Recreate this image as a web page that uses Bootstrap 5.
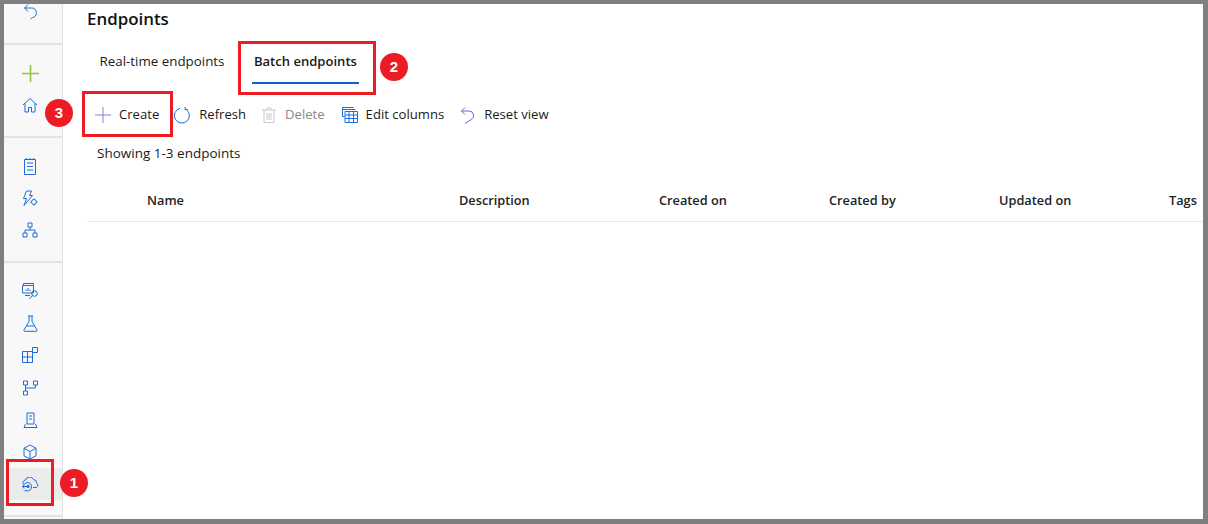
<!DOCTYPE html>
<html lang="en">

<head>
	<meta charset="UTF-8">
	<title>Endpoints</title>
	<link href="https://cdn.jsdelivr.net/npm/bootstrap@5.3.0/dist/css/bootstrap.min.css" rel="stylesheet">
	<style>
		html, body { height: 524px; overflow: hidden; }
		body {
			background: #7f7f7f;
			padding: 4px 5px 5px 4px;
			font-family: "Open Sans", "Noto Sans", sans-serif;
			font-size: 13px;
			color: #1b1a19;
		}
		svg { display: block; fill: none; stroke: currentColor; stroke-width: 1; }
		.app-frame { height: 515px; background: #fff; overflow: hidden; }
		.side-rail { width: 59px; flex: none; background: #f8f8f8; border-right: 1px solid #e1e1e1; color: #1a6ddb; }
		.rail-group { border-bottom: 2px solid #e3e3e3; padding-left: 5px; }
		.rail-group-undo { height: 41px; }
		.rail-group-add { height: 93px; padding-top: 12px; }
		.rail-group-tasks { height: 125px; padding-top: 12px; }
		.rail-group-assets { height: 254px; padding-top: 12px; }
		.rail-item { height: 32.2px; width: 53px; padding-right: 11px; }
		.rail-item.is-active { background: #ebebeb; }
		.main-pane { padding-left: 24px; min-width: 0; }
		.page-title { font-size: 16.9px; font-weight: 600; line-height: 22px; padding-top: 4px; margin: 0; color: #111; }
		.tab-row { padding-top: 16px; height: 56px; }
		.tab-link { height: 38px; line-height: 30px; padding: 0 12.5px; font-size: 13.35px; color: #1b1a19; text-decoration: none; border-bottom: 2px solid transparent; }
		.tab-link.is-current { font-size: 13.05px; font-weight: 600; border-bottom-color: #0f5fc9; padding: 0 2px; margin-left: 15px; }
		.tool-row { height: 40px; margin-top: 9px; }
		.tool-btn { border: 0; background: none; padding: 0; height: 32px; color: #1b1a19; font-size: 13.1px; margin-right: 16px; }
		.tool-btn svg { color: #1a6ddb; }
		.tool-btn.is-first { margin-left: 8px; margin-right: 15px; }
		.tool-btn.is-disabled { color: #8a8886; margin-right: 17px; }
		.tool-btn.is-disabled svg { color: #c8c8c8; }
		.count-line { padding: 8px 0 0 10px; line-height: 20px; font-size: 13.5px; height: 39px; }
		.head-row { height: 35px; margin-top: 13px; padding-top: 5px; font-size: 12.75px; font-weight: 600; border-bottom: 1px solid #e8e8e8; padding-left: 60px; line-height: 16px; white-space: nowrap; color: #222; }
		.head-cell { width: 170px; flex: none; }
		.head-cell-name { width: 312px; }
		.head-cell-desc { width: 200px; }
		.note-box { position: absolute; border: 3px solid #ed1c24; pointer-events: none; }
		.note-dot { position: absolute; width: 28px; height: 28px; border-radius: 50%; background: #ed1c24; color: #fff; font: 700 15px/28px "Liberation Sans", sans-serif; text-align: center; }
	</style>
</head>

<body>
	<div class="app-frame d-flex position-relative">
		<nav class="side-rail d-flex flex-column">
			<div class="rail-group rail-group-undo">
				<div class="rail-item d-flex justify-content-center align-items-center" style="height: 17px">
					<svg width="14" height="17" viewBox="0 0 14 17"><path d="M5 .5 1.500 4 5 7.500M1.500 4H8.500a4.800 4.800 0 0 1 1 9.500L7.500 15"/></svg>
				</div>
			</div>
			<div class="rail-group rail-group-add">
				<div class="rail-item d-flex justify-content-center align-items-center">
					<svg width="17" height="17" viewBox="0 0 17 17" style="color:#8cc63f;stroke-width:1.6"><path d="M8.500 0v17M0 8.500h17"/></svg>
				</div>
				<div class="rail-item d-flex justify-content-center align-items-center">
					<svg width="16" height="16" viewBox="0 0 16 16"><path d="M1 8 8 1.500 15 8M3 6.500V15h3.500v-4.500h3V15H13V6.500"/></svg>
				</div>
			</div>
			<div class="rail-group rail-group-tasks">
				<div class="rail-item d-flex justify-content-center align-items-center">
					<svg width="14" height="17" viewBox="0 0 14 17"><path d="M1.500 1.500h11v15h-11zM4 5h6M4 8.500h6M4 12h6M3.500 0v2M7 0v2M10.500 0v2"/></svg>
				</div>
				<div class="rail-item d-flex justify-content-center align-items-center">
					<svg width="16" height="17" viewBox="0 0 16 17"><path d="M4.500 1h5L7.500 5.500h3L2 15.500l2.500-7H1.500z"/><circle cx="12" cy="12" r="2.500"/><path d="M12 8.500v1M12 14.500v1M8.500 12h1M14.500 12h1"/></svg>
				</div>
				<div class="rail-item d-flex justify-content-center align-items-center">
					<svg width="16" height="16" viewBox="0 0 16 16"><path d="M6 1h4v4H6zM1 11h4v4H1zM11 11h4v4h-4zM8 5v3M3 11V8h10v3"/></svg>
				</div>
			</div>
			<div class="rail-group rail-group-assets">
				<div class="rail-item d-flex justify-content-center align-items-center">
					<svg width="17" height="17" viewBox="0 0 17 17"><path d="M1.500 2V.5h10V2M.5 2.500h11V10H.5zM3 12.500h5M4 8V6.500M6 8V5M8 8V6.500"/><circle cx="12.500" cy="10.500" r="2.800"/><path d="M10.500 12.500 7.500 16"/></svg>
				</div>
				<div class="rail-item d-flex justify-content-center align-items-center">
					<svg width="15" height="17" viewBox="0 0 15 17"><path d="M5 1h5M6 1v5.500L1 15a.8.8 0 0 0 .7 1.300h11.600A.8.8 0 0 0 14 15L9 6.500V1M3.500 11h8"/></svg>
				</div>
				<div class="rail-item d-flex justify-content-center align-items-center">
					<svg width="16" height="16" viewBox="0 0 16 16"><path d="M.5 4.500h10v11H.5zM.5 10h10M5.500 4.500v11M10.500 .5h5v5h-5z"/></svg>
				</div>
				<div class="rail-item d-flex justify-content-center align-items-center">
					<svg width="15" height="16" viewBox="0 0 15 16"><path d="M.5 1h4v4h-4zM10.500 1h4v4h-4zM.5 11h4v4h-4zM2.500 5v6M2.500 8h10V5"/></svg>
				</div>
				<div class="rail-item d-flex justify-content-center align-items-center">
					<svg width="15" height="16" viewBox="0 0 15 16"><path d="M4 1h7v11H4zM6 4h3M6 7h3M2.500 12 1 15.500h13L12.500 12"/></svg>
				</div>
				<div class="rail-item d-flex justify-content-center align-items-center">
					<svg width="14" height="16" viewBox="0 0 14 16"><path d="M7 1 13 4.200v7.600L7 15 1 11.800V4.200zM1 4.200 7 7.500l6-3.300M7 7.500V15"/></svg>
				</div>
				<div class="rail-item is-active d-flex justify-content-center align-items-center">
					<svg width="18" height="15" viewBox="0 0 18 15"><path d="M2.500 7.500A2.800 2.800 0 0 1 4.500 3a4.300 4.300 0 0 1 8-.5A3.300 3.300 0 0 1 15.500 6a2.500 2.500 0 0 1 0 4.500H12"/><path d="M3 11.500A4 4 0 1 1 10.500 10a3.800 3.800 0 0 1-4.500 3.800H3.500"/><circle cx="7" cy="9.500" r="1.200" fill="currentColor"/><path d="M1 9.500h5"/></svg>
				</div>
			</div>
		</nav>

		<main class="main-pane flex-grow-1">
			<h1 class="page-title">Endpoints</h1>
			<div class="tab-row d-flex">
				<a class="tab-link" href="#">Real-time endpoints</a>
				<a class="tab-link is-current" href="#">Batch endpoints</a>
			</div>
			<div class="tool-row d-flex align-items-center">
				<button class="tool-btn is-first d-flex align-items-center gap-2" type="button">
					<svg width="16" height="16" viewBox="0 0 16 16" style="color:#8a80d8"><path d="M8 0v16M0 8h16"/></svg>Create
				</button>
				<button class="tool-btn d-flex align-items-center gap-2" type="button">
					<svg width="17" height="17" viewBox="0 0 17 17"><path d="M6 1.300A7.500 7.500 0 1 0 11.500 2M11 0v2.500h2.800"/></svg>Refresh
				</button>
				<button class="tool-btn is-disabled d-flex align-items-center gap-2" type="button" disabled>
					<svg width="15" height="16" viewBox="0 0 15 16"><path d="M0 3h14M5 3V1h4v2M2 3v12.500h10V3M5 6v7M7 6v7M9 6v7"/></svg>Delete
				</button>
				<button class="tool-btn d-flex align-items-center gap-2" type="button">
					<svg width="16" height="16" viewBox="0 0 16 16"><path d="M.5 .5h11M.5 2.500h13M.5 .5v9h2M3 4.500h12.500v11H3zM3 8h12.500M3 11.500h12.500M7 4.500v11M11.500 4.500v11"/></svg>Edit columns
				</button>
				<button class="tool-btn d-flex align-items-center gap-2" type="button">
					<svg width="16" height="17" viewBox="0 0 16 17" style="color:#5a6ae0"><path d="M5 .5 1.500 4 5 7.500M1.500 4H9a4.500 4.500 0 0 1 2.500 8.300L5 16.500"/></svg>Reset view
				</button>
			</div>
			<div class="count-line">Showing 1-3 endpoints</div>
			<div class="head-row d-flex align-items-start">
				<div class="head-cell head-cell-name">Name</div>
				<div class="head-cell head-cell-desc">Description</div>
				<div class="head-cell">Created on</div>
				<div class="head-cell">Created by</div>
				<div class="head-cell">Updated on</div>
				<div class="head-cell">Tags</div>
			</div>
		</main>

		<!-- red callouts drawn on top of the screenshot -->
		<div class="note-box" style="left:2px;top:455px;width:48px;height:47px"></div>
		<div class="note-box" style="left:234px;top:37px;width:138px;height:54px"></div>
		<div class="note-box" style="left:78px;top:87px;width:91px;height:46px"></div>
		<div class="note-dot" style="left:56px;top:465px">1</div>
		<div class="note-dot" style="left:376px;top:49px">2</div>
		<div class="note-dot" style="left:41px;top:95px">3</div>
	</div>

	<script src="https://cdn.jsdelivr.net/npm/bootstrap@5.3.0/dist/js/bootstrap.bundle.min.js"></script>
</body>

</html>
